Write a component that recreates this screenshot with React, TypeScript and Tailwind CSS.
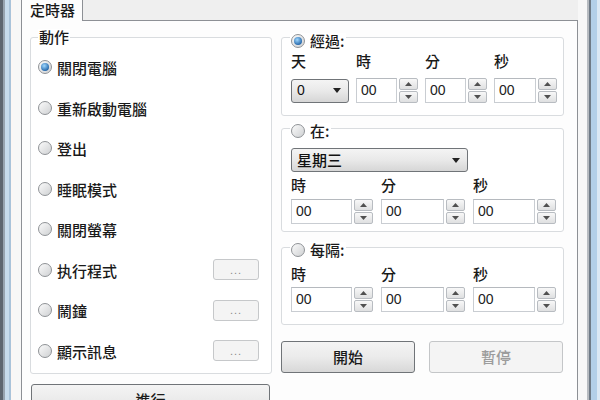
import React from "react";

const CJK = { fontFamily: '"Noto Sans CJK TC", "Noto Sans CJK SC", sans-serif' };
const LAT = { fontFamily: '"Liberation Sans", Arial, sans-serif' };

function Radio({ checked = false }: { checked?: boolean }) {
  return (
    <span className="w-[14px] h-[14px] shrink-0 rounded-full border border-[#8f9296] bg-gradient-to-br from-[#fbfbfb] to-[#cfd1d3] flex items-center justify-center">
      {checked && (
        <span className="w-[8px] h-[8px] rounded-full bg-[radial-gradient(circle_at_40%_35%,#9fd8ff,#2a6cae_70%,#1b4f86)]" />
      )}
    </span>
  );
}

function Arrow({ up = false }: { up?: boolean }) {
  return (
    <svg width="7" height="4" viewBox="0 0 7 4">
      <path d={up ? "M0 4 L3.5 0 L7 4 Z" : "M0 0 L3.5 4 L7 0 Z"} fill="#505050" />
    </svg>
  );
}

function Spinner() {
  return (
    <div className="flex flex-col gap-[1px] w-[19px] h-[25px] shrink-0">
      <div className="flex-1 border border-[#b8bcc1] rounded-[2px] bg-gradient-to-b from-[#f8f8f8] to-[#dfe0e1] flex items-center justify-center">
        <Arrow up />
      </div>
      <div className="flex-1 border border-[#b8bcc1] rounded-[2px] bg-gradient-to-b from-[#f8f8f8] to-[#dfe0e1] flex items-center justify-center">
        <Arrow />
      </div>
    </div>
  );
}

function SpinField({ w }: { w: string }) {
  return (
    <div className="flex items-center gap-[2px]">
      <div
        className={`${w} h-[25px] border border-[#c9cdd2] border-t-[#b5b9be] bg-white flex items-center pl-[4px] text-[14px] text-[#222]`}
        style={LAT}
      >
        00
      </div>
      <Spinner />
    </div>
  );
}

function Combo({ text, w, cjk = false }: { text: string; w: string; cjk?: boolean }) {
  return (
    <div
      className={`${w} h-[24px] rounded-[3px] border border-[#707478] bg-gradient-to-b from-[#f4f4f4] via-[#e9e9e9] to-[#d6d6d6] flex items-center pl-[5px] pr-[7px] text-[#111]`}
    >
      <span className={cjk ? "text-[15px] font-medium" : "text-[14px]"} style={cjk ? CJK : LAT}>
        {text}
      </span>
      <span className="ml-auto">
        <svg width="8" height="5" viewBox="0 0 8 5">
          <path d="M0 0 L4 5 L8 0 Z" fill="#222" />
        </svg>
      </span>
    </div>
  );
}

function DotsButton() {
  return (
    <div className="w-[46px] h-[21px] rounded-[3px] border border-[#c6c8ca] bg-[#f4f4f4] flex items-center justify-center text-[11px] text-[#8a8a8a] tracking-[1px]" style={LAT}>
      ...
    </div>
  );
}

const actions: { label: string; checked?: boolean; dots?: boolean }[] = [
  { label: "關閉電腦", checked: true },
  { label: "重新啟動電腦" },
  { label: "登出" },
  { label: "睡眠模式" },
  { label: "關閉螢幕" },
  { label: "执行程式", dots: true },
  { label: "鬧鐘", dots: true },
  { label: "顯示訊息", dots: true },
];

function Label({ children }: { children: React.ReactNode }) {
  return (
    <span className="text-[15px] leading-[16px] font-medium text-[#1a1a1a]" style={CJK}>
      {children}
    </span>
  );
}

export default function App() {
  return (
    <div className="w-[600px] h-[400px] overflow-hidden flex bg-[#f5f5f5]" style={CJK}>
      {/* left window frame */}
      <div className="flex h-full shrink-0">
        <div className="w-[3px] bg-[#5e6670]" />
        <div className="w-[2px] bg-[#97a3af]" />
        <div className="w-[4px] bg-[#c7dbec]" />
        <div className="w-[2px] bg-[#a9c3da]" />
        <div className="w-[2px] bg-[#fbf6f4]" />
      </div>

      {/* dialog body */}
      <div className="flex-1 flex flex-col pl-[8px] bg-[#f7f7f7]">
        {/* tab strip */}
        <div className="flex h-[21px] shrink-0">
          <div className="w-[62px] h-[21px] border-l border-r border-[#8d9095] bg-[#fdfdfd] pl-[8px] flex items-center">
            <span className="text-[15px] font-medium text-[#1a1a1a]">定時器</span>
          </div>
          <div className="w-[495px] h-[21px] bg-[#efefef] border-b border-[#8d9095]" />
          <div className="flex-1" />
        </div>

        {/* tab panel */}
        <div className="w-[557px] flex-1 border-l border-r border-[#8d9095] bg-[#fdfdfd] pl-[8px] pr-[13px] pt-[16px] flex gap-[9px]">
          {/* left column */}
          <div className="w-[242px] flex flex-col">
            <div className="h-[337px] border border-[#d9dcdf] rounded-[3px] bg-white flex flex-col pl-[7px] pr-[12px]">
              <div className="-mt-[9px] ml-[0px] px-[1px] bg-white self-start h-[16px] flex items-center">
                <Label>動作</Label>
              </div>
              <div className="mt-[2px] flex flex-col">
                {actions.map((a) => (
                  <div key={a.label} className="h-[40.5px] flex items-center">
                    <Radio checked={a.checked} />
                    <span className="ml-[5px]">
                      <Label>{a.label}</Label>
                    </span>
                    {a.dots && (
                      <span className="ml-auto">
                        <DotsButton />
                      </span>
                    )}
                  </div>
                ))}
              </div>
            </div>
            <div className="mt-[10px] ml-[1px] w-[239px] h-[32px] shrink-0 rounded-[3px] border border-[#707478] bg-gradient-to-b from-[#f4f4f4] via-[#ebebeb] to-[#d8d8d8] flex items-center justify-center">
              <Label>進行</Label>
            </div>
          </div>

          {/* right column */}
          <div className="w-[283px] flex flex-col">
            {/* 經過 */}
            <div className="border border-[#d9dcdf] rounded-[3px] bg-white pl-[9px] pb-[12px] flex flex-col">
              <div className="-mt-[5px] -ml-[1px] pl-[1px] pr-[2px] bg-white self-start h-[16px] flex items-center gap-[5px]">
                <Radio checked />
                <Label>經過:</Label>
              </div>
              <div className="mt-[4px] grid grid-cols-[58px_62px_62px_63px] gap-x-[7px]">
                <Label>天</Label>
                <Label>時</Label>
                <Label>分</Label>
                <Label>秒</Label>
              </div>
              <div className="mt-[9px] grid grid-cols-[58px_62px_62px_63px] gap-x-[7px] items-center">
                <Combo text="0" w="w-[58px]" />
                <SpinField w="w-[41px]" />
                <SpinField w="w-[41px]" />
                <SpinField w="w-[42px]" />
              </div>
            </div>

            {/* 在 */}
            <div className="mt-[12px] border border-[#d9dcdf] rounded-[3px] bg-white pl-[9px] pb-[7px] flex flex-col">
              <div className="-mt-[6px] -ml-[1px] pl-[1px] pr-[2px] bg-white self-start h-[16px] flex items-center gap-[5px]">
                <Radio />
                <Label>在:</Label>
              </div>
              <div className="mt-[9px]">
                <Combo text="星期三" w="w-[177px]" cjk />
              </div>
              <div className="mt-[5px] grid grid-cols-[82px_84px_83px] gap-x-[8px]">
                <Label>時</Label>
                <Label>分</Label>
                <Label>秒</Label>
              </div>
              <div className="mt-[6px] grid grid-cols-[82px_84px_83px] gap-x-[8px]">
                <SpinField w="w-[61px]" />
                <SpinField w="w-[63px]" />
                <SpinField w="w-[62px]" />
              </div>
            </div>

            {/* 每隔 */}
            <div className="mt-[15px] border border-[#d9dcdf] rounded-[3px] bg-white pl-[9px] pb-[12px] flex flex-col">
              <div className="-mt-[6px] -ml-[1px] pl-[1px] pr-[2px] bg-white self-start h-[16px] flex items-center gap-[5px]">
                <Radio />
                <Label>每隔:</Label>
              </div>
              <div className="mt-[8px] grid grid-cols-[82px_84px_83px] gap-x-[8px]">
                <Label>時</Label>
                <Label>分</Label>
                <Label>秒</Label>
              </div>
              <div className="mt-[5px] grid grid-cols-[82px_84px_83px] gap-x-[8px]">
                <SpinField w="w-[61px]" />
                <SpinField w="w-[63px]" />
                <SpinField w="w-[62px]" />
              </div>
            </div>

            {/* buttons */}
            <div className="mt-[16px] flex gap-[14px]">
              <div className="w-[134px] h-[32px] rounded-[3px] border border-[#707478] bg-gradient-to-b from-[#f4f4f4] via-[#ebebeb] to-[#d8d8d8] flex items-center justify-center">
                <Label>開始</Label>
              </div>
              <div className="w-[134px] h-[32px] rounded-[3px] border border-[#c4c6c8] bg-[#f4f4f4] flex items-center justify-center">
                <span className="text-[15px] font-medium text-[#9c9c9c]">暫停</span>
              </div>
            </div>
          </div>
        </div>
      </div>

      {/* right window frame */}
      <div className="flex h-full shrink-0">
        <div className="w-[2px] bg-[#b7bbc0]" />
        <div className="w-[2px] bg-[#6f7a86]" />
        <div className="w-[6px] bg-[#b3cfe8]" />
        <div className="w-[3px] bg-[#dbe8f4]" />
      </div>
    </div>
  );
}
